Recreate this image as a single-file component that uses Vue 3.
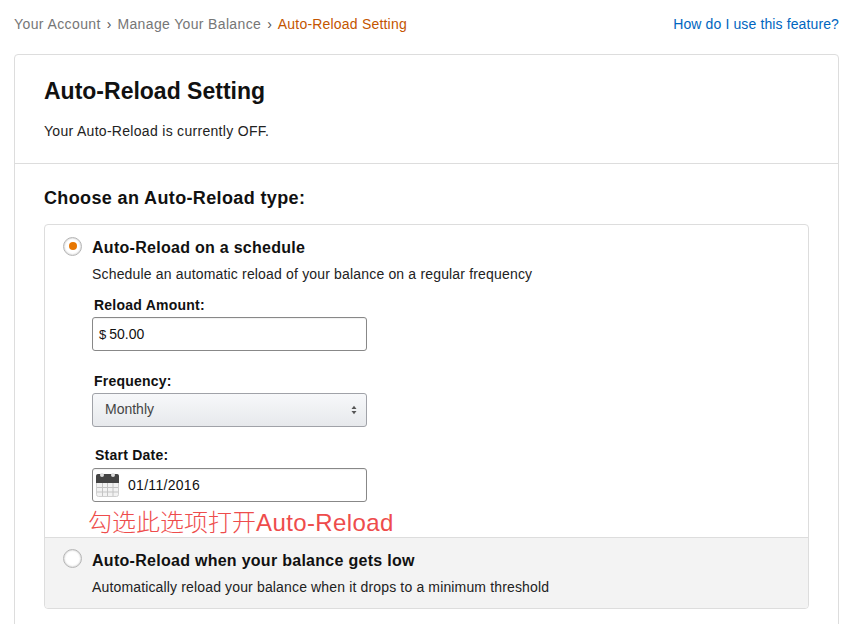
<script setup>
const crumbs = [
  { text: 'Your Account', cls: 'c1' },
  { text: 'Manage Your Balance', cls: 'c2' }
]
</script>

<template>
  <div class="page">
    <div class="topbar">
      <div class="crumbs">
        <template v-for="c in crumbs" :key="c.text">
          <span class="crumb" :class="c.cls">{{ c.text }}</span><span class="sep">›</span>
        </template>
        <span class="crumb current">Auto-Reload Setting</span>
      </div>
      <a class="help">How do I use this feature?</a>
    </div>

    <div class="card">
      <div class="head">
        <h1>Auto-Reload Setting</h1>
        <p class="status">Your Auto-Reload is currently OFF.</p>
      </div>
      <div class="body">
        <h2>Choose an Auto-Reload type:</h2>
        <div class="box">
          <div class="option">
            <div class="opt-title">
              <span class="radio on"><span class="dot"></span></span>
              <span class="opt-name">Auto-Reload on a schedule</span>
            </div>
            <p class="opt-desc d1">Schedule an automatic reload of your balance on a regular frequency</p>
            <div class="field first">
              <label class="lab-a">Reload Amount:</label>
              <div class="input"><span class="dollar">$</span><span class="val">50.00</span></div>
            </div>
            <div class="field">
              <label class="lab-a">Frequency:</label>
              <div class="select">
                <span class="sel-text">Monthly</span>
                <svg width="6" height="10" viewBox="0 0 6 10"><path d="M3 0.8 L5.5 4 H0.5 Z M3 9.2 L0.5 6 H5.5 Z" fill="#555"/></svg>
              </div>
            </div>
            <div class="field">
              <label class="lab-b">Start Date:</label>
              <div class="input date">
                <svg class="cal" width="24" height="24" viewBox="0 0 24 24">
                  <rect x="0.5" y="1.5" width="22" height="22" rx="2" fill="#f2f2f2" stroke="#cfcfcf"/>
                  <path d="M0 10 V3 a2 2 0 0 1 2-2 H21 a2 2 0 0 1 2 2 V10 Z" fill="#444"/>
                  <rect x="4" y="0" width="4" height="4" rx="2" fill="#ddd"/>
                  <rect x="15" y="0" width="4" height="4" rx="2" fill="#ddd"/>
                  <path d="M1 14.5 H22 M1 19 H22 M6.5 10 V23 M11.5 10 V23 M17 10 V23" stroke="#c4c4c4" stroke-width="1" fill="none"/>
                </svg>
                <span class="val">01/11/2016</span>
              </div>
            </div>
            <div class="note">勾选此选项打开<span class="note-en">Auto-Reload</span></div>
          </div>
          <div class="option low">
            <div class="opt-title">
              <span class="radio"></span>
              <span class="opt-name">Auto-Reload when your balance gets low</span>
            </div>
            <p class="opt-desc d2">Automatically reload your balance when it drops to a minimum threshold</p>
          </div>
        </div>
      </div>
    </div>
  </div>
</template>

<style>
html, body { margin: 0; background: #fff; overflow: hidden; }
</style>

<style scoped>
.page {
  width: 850px;
  height: 624px;
  box-sizing: border-box;
  padding: 0 11px 0 14px;
  overflow: hidden;
  font-family: "Liberation Sans", Arial, sans-serif;
  font-size: 14px;
  color: #111;
}
.topbar {
  display: flex;
  justify-content: space-between;
  align-items: center;
  height: 48px;
  font-size: 14px;
  margin-bottom: 6px;
}
.crumb { color: #767676; }
.c1 { letter-spacing: .4px; }
.c2 { letter-spacing: .35px; }
.crumb.current { color: #c45500; letter-spacing: .2px; }
.sep { color: #555; margin: 0 6px; }
.help { color: #0066c0; letter-spacing: .12px; }
.card {
  border: 1px solid #ddd;
  border-radius: 4px;
  padding-bottom: 40px;
}
.head {
  padding: 22px 29px 0;
  height: 109px;
  box-sizing: border-box;
  border-bottom: 1px solid #ddd;
}
h1 { margin: 0; font-size: 23px; line-height: 29px; font-weight: 700; }
.status { margin: 16px 0 0; font-size: 14px; line-height: 19px; letter-spacing: .3px; color: #222; }
.body { padding: 22px 29px 0; }
h2 { margin: 0 0 14px; font-size: 18px; line-height: 24px; font-weight: 700; letter-spacing: .37px; }
.box { border: 1px solid #ddd; border-radius: 4px; }
.option { padding: 12px 18px 0 18px; height: 312px; box-sizing: border-box; }
.option.low {
  height: 71px;
  background: #f3f3f3;
  border-top: 1px solid #ddd;
  border-radius: 0 0 4px 4px;
}
.opt-title { display: flex; align-items: center; height: 20px; }
.radio {
  width: 19px;
  height: 19px;
  box-sizing: border-box;
  border: 1px solid #b5b5b5;
  border-radius: 50%;
  background: #fff;
  box-shadow: inset 0 0 2px rgba(0,0,0,.3);
  display: flex;
  align-items: center;
  justify-content: center;
  margin-right: 10px;
  margin-top: -2px;
  flex: none;
}
.low .radio { margin-top: -3px; }
.dot { width: 8px; height: 8px; border-radius: 50%; background: #e77600; }
.opt-name { font-size: 16px; font-weight: 700; letter-spacing: .28px; margin-top: 2px; }
.opt-desc { margin: 8px 0 0 29px; line-height: 19px; color: #222; }
.d1 { letter-spacing: .17px; }
.d2 { letter-spacing: .15px; margin-top: 8px; }
.field { margin-left: 29px; width: 275px; }
.field.first { margin-top: 12px; }
.field label { display: block; font-weight: 700; line-height: 19px; letter-spacing: .23px; }
.lab-a { padding-left: 2px; }
.lab-b { padding-left: 3px; }
.input, .select {
  box-sizing: border-box;
  height: 34px;
  border: 1px solid #888;
  border-radius: 3px;
  display: flex;
  align-items: center;
  margin-top: 2px;
  margin-bottom: 21px;
}
.input { padding-left: 6px; background: #fff; box-shadow: inset 0 1px 1px rgba(0,0,0,.06); font-size: 14px; }
.dollar { font-size: 13px; margin-right: 3px; }
.select {
  justify-content: space-between;
  padding: 0 9px 0 12px;
  background: linear-gradient(#f7f8fa, #e7e9ec);
  border-color: #a0a2a8;
  color: #444;
  font-size: 14px;
  margin-bottom: 19px;
}
.sel-text { margin-top: -2px; }
.date { padding-left: 3px; margin-top: 3px; margin-bottom: 0; }
.date .val { margin-left: 8px; font-size: 14px; letter-spacing: .3px; }
.cal { flex: none; margin-top: -1px; }
.note {
  margin: 6px 0 0 -22px;
  padding-left: 47px;
  font-family: "Liberation Sans", "Noto Sans CJK SC", sans-serif;
  font-size: 24px;
  font-weight: 300;
  line-height: 30px;
  color: #ee4c4c;
  white-space: nowrap;
}
.note-en { letter-spacing: .4px; }
</style>
